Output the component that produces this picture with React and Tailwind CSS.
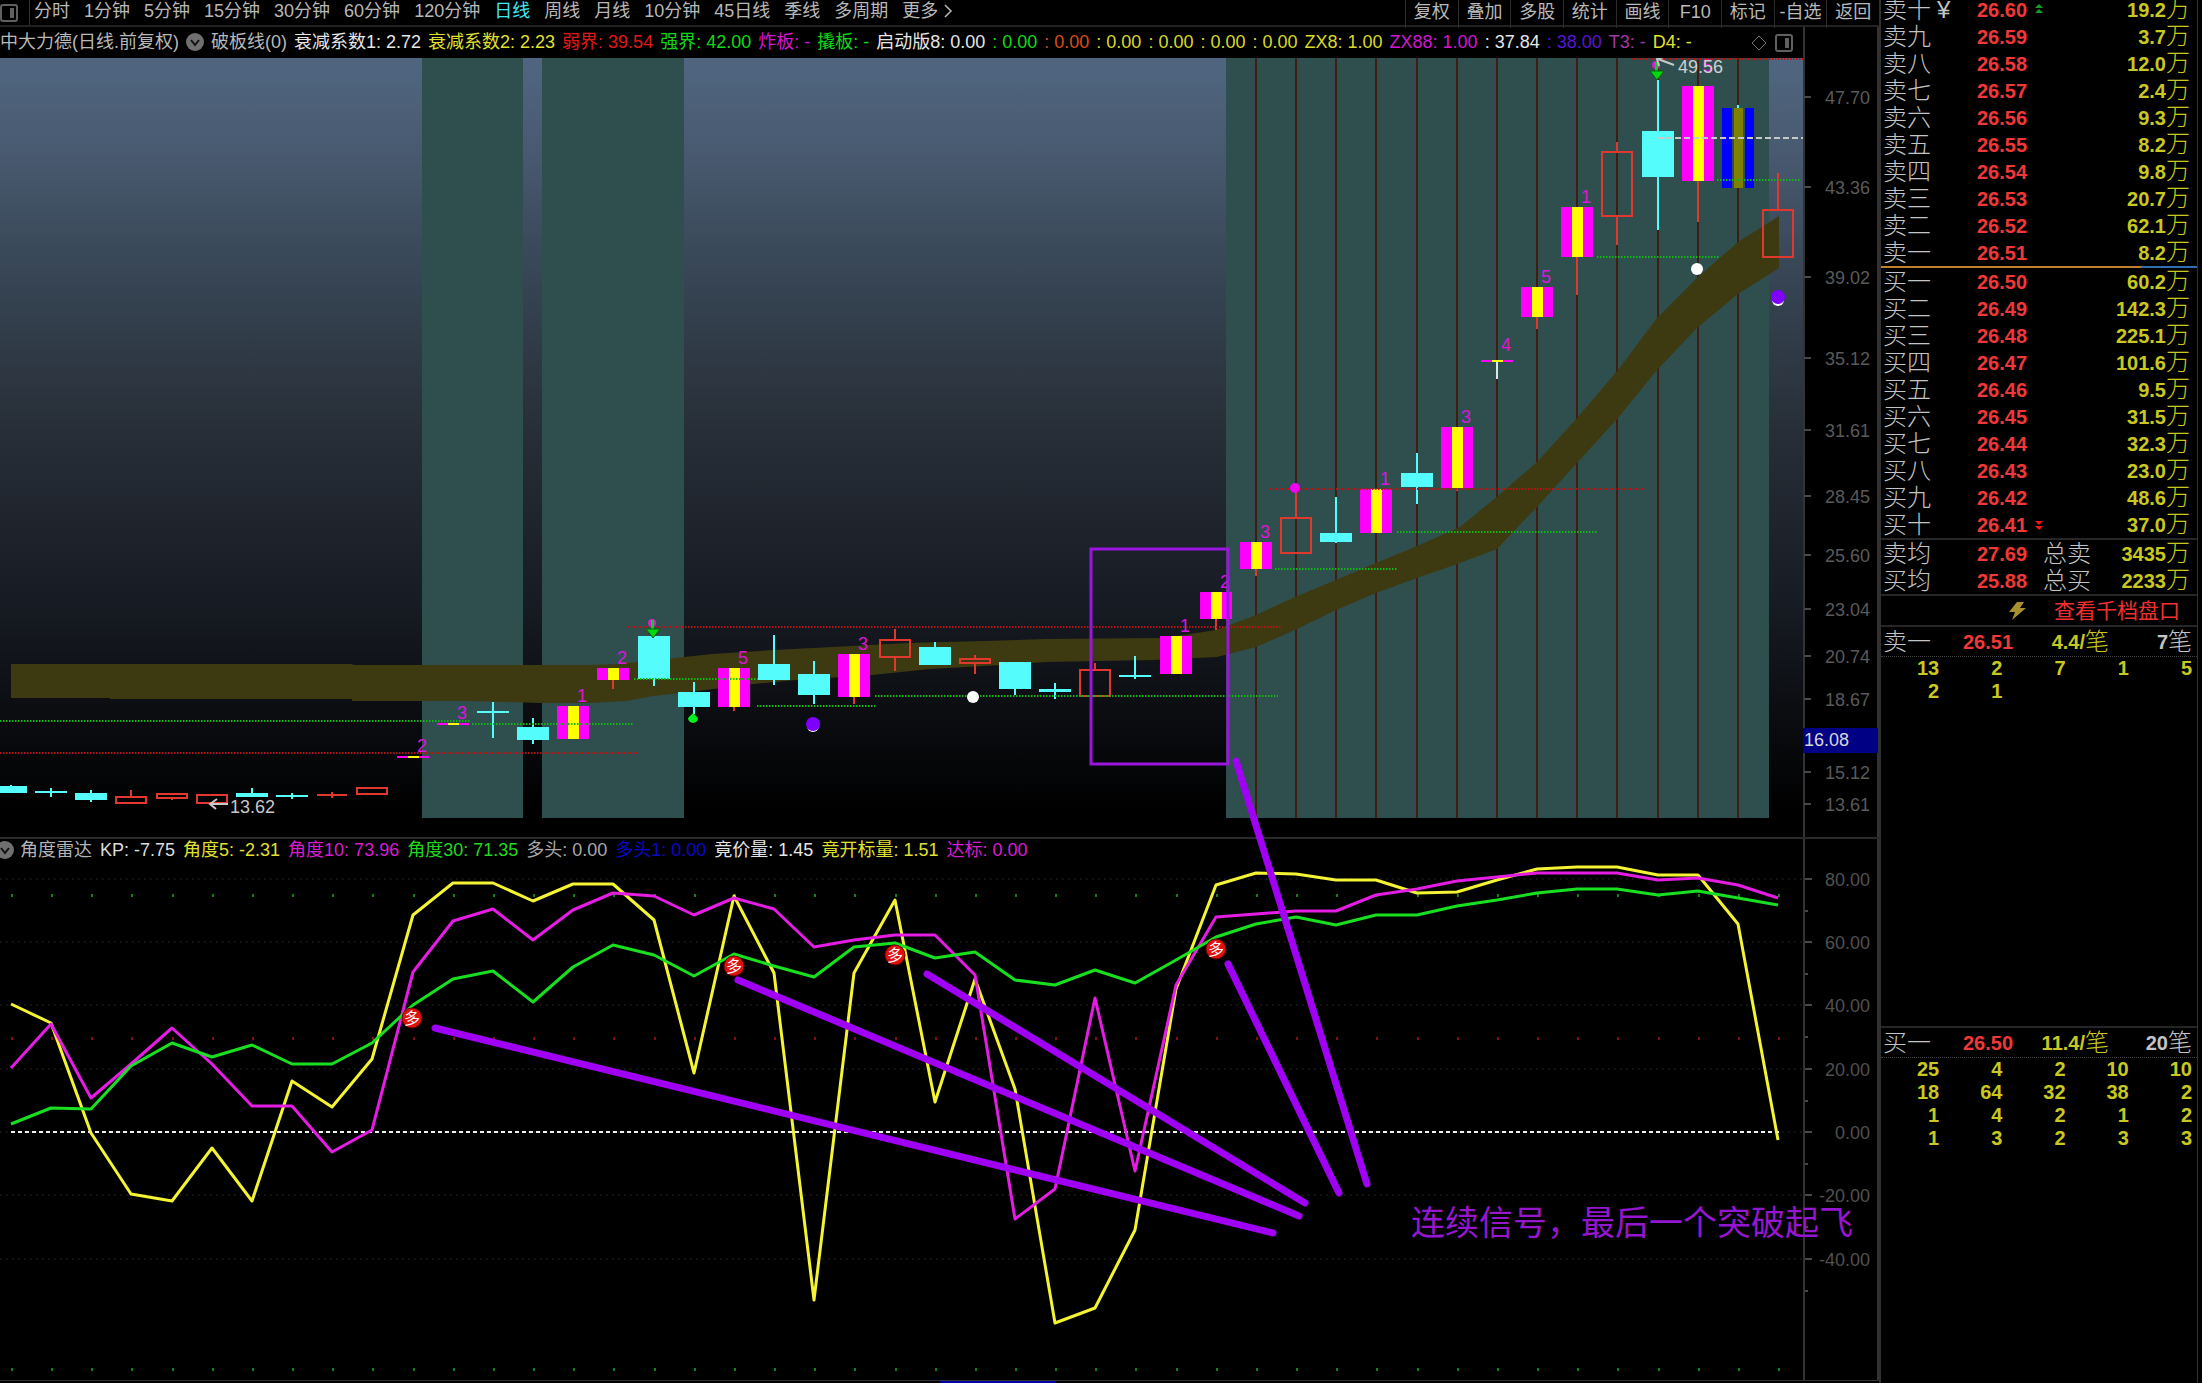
import React from "react";

const FONT = "font-['Liberation_Sans','Noto_Sans_CJK_SC',sans-serif]";

const PERIODS = ["分时", "1分钟", "5分钟", "15分钟", "30分钟", "60分钟", "120分钟", "日线", "周线", "月线", "10分钟", "45日线", "季线", "多周期", "更多"];
const TOOLS = ["复权", "叠加", "多股", "统计", "画线", "F10", "标记", "-自选", "返回"];

const MAIN_READOUT = [
  ["衰减系数1: 2.72", "text-[#e6e6e6]"],
  ["衰减系数2: 2.23", "text-[#e0e030]"],
  ["弱界: 39.54", "text-[#e01818]"],
  ["强界: 42.00", "text-[#10d818]"],
  ["炸板: -", "text-[#d018d0]"],
  ["撬板: -", "text-[#10d818]"],
  ["启动版8: 0.00", "text-[#e6e6e6]"],
  [": 0.00", "text-[#10d818]"],
  [": 0.00", "text-[#d84c1c]"],
  [": 0.00", "text-[#d8d828]"],
  [": 0.00", "text-[#d8d828]"],
  [": 0.00", "text-[#d8d828]"],
  [": 0.00", "text-[#d8d828]"],
  ["ZX8: 1.00", "text-[#d8d828]"],
  ["ZX88: 1.00", "text-[#d018d0]"],
  [": 37.84", "text-[#e6e6e6]"],
  [": 38.00", "text-[#5a14d8]"],
  ["T3: -", "text-[#a038a8]"],
  ["D4: -", "text-[#e0e030]"],
];

const SUB_READOUT = [
  ["角度雷达", "text-[#b4b4b4]"],
  ["KP: -7.75", "text-[#dcdcdc]"],
  ["角度5: -2.31", "text-[#e0e030]"],
  ["角度10: 73.96", "text-[#d81cd0]"],
  ["角度30: 71.35", "text-[#20d820]"],
  ["多头: 0.00", "text-[#a8a8a8]"],
  ["多头1: 0.00", "text-[#0808c8]"],
  ["竟价量: 1.45", "text-[#e6e6e6]"],
  ["竟开标量: 1.51", "text-[#e0e030]"],
  ["达标: 0.00", "text-[#d81cd0]"],
];

const barX = (i) => Math.round(11 + 40.16 * i);

// kind, body top, body bottom, wick top, wick bottom, streak label
const BARS = [
  ["down", 786, 793, 785, 793], ["down", 791, 793, 788, 797], ["down", 793, 800, 790, 802],
  ["up", 796, 803, 790, 803], ["up", 793, 798, 793, 800], ["up", 794, 803, 794, 803],
  ["down", 793, 797, 788, 797], ["down", 795, 797, 793, 799], ["flatUp", 794, 796, 792, 798],
  ["up", 787, 794, 787, 794], ["limit", 756, 758, 756, 758, "2"], ["limit", 723, 725, 723, 725, "3"],
  ["down", 711, 713, 702, 738], ["down", 727, 740, 718, 744], ["limit", 706, 739, 706, 739, "1"],
  ["limit", 668, 680, 668, 689, "2"], ["down", 636, 679, 636, 686], ["down", 692, 707, 682, 714],
  ["limit", 668, 707, 668, 711, "5"], ["down", 664, 680, 635, 685], ["down", 674, 695, 661, 704],
  ["limit", 654, 697, 654, 704, "3"], ["up", 639, 657, 629, 671], ["down", 647, 665, 642, 665],
  ["up", 658, 663, 655, 674], ["down", 662, 689, 662, 695], ["down", 689, 692, 683, 699],
  ["up", 669, 696, 663, 696], ["down", 675, 677, 656, 679], ["limit", 636, 674, 636, 674, "1"],
  ["limit", 592, 619, 592, 630, "2"], ["limit", 542, 569, 542, 576, "3"], ["up", 517, 553, 490, 553],
  ["down", 533, 542, 497, 543], ["limit", 489, 533, 489, 533, "1"], ["down", 473, 487, 453, 504],
  ["limit", 427, 488, 427, 491, "3"], ["spike", 360, 362, 360, 379, "4"], ["limit", 287, 317, 287, 329, "5"],
  ["limit", 207, 257, 207, 295, "1"], ["up", 151, 216, 142, 245], ["down", 131, 177, 80, 230],
  ["limit", 86, 181, 86, 222, "5"], ["blue", 108, 188, 105, 188], ["up", 209, 257, 173, 257],
];

const LIMIT_FILL = "#ff00ff";
const CYAN = "#54fcfc";
const RED = "#e0382e";

function Bar({ i, bar }) {
  const [kind, top, bottom, high, low, label] = bar;
  const x = barX(i);
  const h = bottom - top;
  const wick = (color) => <path d={`M${x} ${high}V${top}M${x} ${bottom}V${low}`} stroke={color} strokeWidth="2" />;
  const labelY = i === 42 ? 72 : top - (kind === "spike" ? 9 : 4);
  return (
    <g>
      {kind === "down" && <>{wick(CYAN)}<rect x={x - 16} y={top} width="32" height={h} fill={CYAN} /></>}
      {kind === "up" && <>{wick(RED)}<rect x={x - 15} y={top + 1} width="30" height={h - 1} fill="none" stroke={RED} strokeWidth="2" /></>}
      {kind === "flatUp" && <>{wick(RED)}<rect x={x - 15} y={top} width="30" height={h} fill={RED} /></>}
      {(kind === "limit" || kind === "spike") && (
        <>
          {wick(kind === "limit" ? RED : "#d8e8e8")}
          <rect x={x - 16} y={top} width="32" height={h} fill={LIMIT_FILL} />
          <rect x={x - 5} y={top} width="11" height={h} fill="#ffff00" />
        </>
      )}
      {kind === "blue" && (
        <>
          {wick(CYAN)}
          <rect x={x - 16} y={top} width="32" height={h} fill="#0000ff" />
          <rect x={x - 6} y={top} width="2" height={h} fill="#2f4f4f" />
          <rect x={x - 4} y={top} width="9" height={h} fill="#808000" />
          <rect x={x + 5} y={top} width="2" height={h} fill="#2f4f4f" />
        </>
      )}
      {label && <text x={x + 4} y={labelY} fontSize="18" fill="#dc14dc">{label}</text>}
    </g>
  );
}

const BAND =
  "11,664 352,664 353,665 590,665 620,664 653,660 675,658 712,654 774,650 832,647 908,643 984,641 1046,639 1162,638 1190,634 1216,630 1256,615 1295,597 1336,580 1376,563 1417,546 1460,527 1499,495 1537,462 1577,418 1618,370 1657,318 1697,278 1738,242 1779,216 " +
  "1779,268 1738,294 1697,328 1657,370 1618,418 1577,463 1537,507 1497,549 1460,563 1417,578 1376,593 1336,610 1295,630 1256,647 1217,657 1153,660 1046,662 1002,665 930,669 872,675 796,680 754,684 689,692 653,696 627,701 590,703 540,703 470,701 352,701 352,699 110,699 110,698 11,698";

const GREEN_LEVELS = [[721, 0, 471], [724, 472, 633], [679, 634, 758], [706, 757, 875], [696, 875, 1278], [569, 1275, 1397], [532, 1397, 1598], [257, 1597, 1719], [180, 1717, 1800]];
const RED_LEVELS = [[753, 0, 638], [627, 628, 1281], [489, 1270, 1644], [59, 1631, 1803]];
const PRICE_TICKS = [["47.70", 97], ["43.36", 187], ["39.02", 277], ["35.12", 358], ["31.61", 430], ["28.45", 496], ["25.60", 555], ["23.04", 609], ["20.74", 656], ["18.67", 699], ["15.12", 772], ["13.61", 804]];

function DownArrow({ x, y }) {
  return (
    <g fill="#00d810">
      <circle cx={x - 1} cy={y + 3} r="4" fill="#d020d0" />
      <rect x={x - 2} y={y} width="3" height="10" />
      <path d={`M${x - 7} ${y + 9}h14l-7 9z`} stroke="#046010" strokeWidth="1" />
    </g>
  );
}

function PriceChart() {
  return (
    <svg viewBox="0 58 1879 779" className="block h-auto w-full" role="img" aria-label="日线 K线图">
      <defs>
        <linearGradient id="sky" x1="0" y1="0" x2="0" y2="1">
          <stop offset="0" stopColor="#506680" />
          <stop offset="0.12" stopColor="#485a70" />
          <stop offset="0.28" stopColor="#374554" />
          <stop offset="0.48" stopColor="#272e37" />
          <stop offset="0.7" stopColor="#171b23" />
          <stop offset="0.97" stopColor="#000000" />
        </linearGradient>
      </defs>
      <rect x="0" y="58" width="1803" height="779" fill="url(#sky)" />
      <g fill="#2f4f4f">
        <rect x="422" y="58" width="101" height="760" />
        <rect x="542" y="58" width="142" height="760" />
        <rect x="1226" y="58" width="543" height="760" />
      </g>
      {BARS.map((_, i) => i >= 31 && i <= 43 && <path key={i} d={`M${barX(i)} 58V818`} stroke="#401c12" strokeWidth="2" />)}
      <polygon points={BAND} fill="#3d3a12" />
      <g shapeRendering="crispEdges">
        {BARS.map((bar, i) => <Bar key={i} i={i} bar={bar} />)}
      </g>
      {GREEN_LEVELS.map(([y, a, b]) => <path key={y} d={`M${a} ${y}H${b}`} stroke="#10b810" strokeWidth="2" strokeDasharray="1.5 1.5" />)}
      {RED_LEVELS.map(([y, a, b]) => <path key={y} d={`M${a} ${y}H${b}`} stroke="#b81414" strokeWidth="2" strokeDasharray="1.5 1.5" />)}
      <path d="M1657 138H1803" stroke="#c8c8c8" strokeWidth="2" strokeDasharray="6 3" />
      <DownArrow x={653} y={620} />
      <DownArrow x={1657} y={62} />
      <path d="M693 713l5 5a5 5 0 1 1 -10 0z" fill="#00f020" />
      <circle cx="1295" cy="488" r="5" fill="#f000f0" />
      <circle cx="973" cy="697" r="6" fill="#fff" />
      <circle cx="1697" cy="269" r="6" fill="#fff" />
      <circle cx="813" cy="726" r="6" fill="#fff" />
      <circle cx="813" cy="724" r="7" fill="#8000ff" />
      <circle cx="1778" cy="300" r="6" fill="#fff" />
      <circle cx="1778" cy="297" r="7" fill="#8000ff" />
      <g fill="none" stroke="#c8c8c8" strokeWidth="2">
        <path d="M228 804H210M217 799L210 804L216 809" />
        <path d="M1674 65L1658 59M1664 57L1657 59L1659 66" />
      </g>
      <text x="230" y="813" fontSize="18" fill="#c8c8c8">13.62</text>
      <text x="1678" y="73" fontSize="18" fill="#d0d0d0">49.56</text>

      <rect x="1803" y="58" width="76" height="779" fill="#000" />
      <path d="M1804 58V837M1878 58V837" stroke="#333" strokeWidth="2" />
      {PRICE_TICKS.map(([t, y]) => (
        <g key={t}>
          <path d={`M1804 ${y}h7`} stroke="#484848" strokeWidth="2" />
          <text x="1870" y={y + 7} fontSize="18" textAnchor="end" fill="#5a5a5a">{t}</text>
        </g>
      ))}
      <rect x="1803" y="728" width="75" height="25" fill="#000084" />
      <text x="1804" y="746" fontSize="18" fill="#d8d8d8">16.08</text>
    </svg>
  );
}

const ANGLE5 = [1004, 1023, 1133, 1194, 1201, 1148, 1201, 1081, 1107, 1059, 915, 883, 883, 901, 884, 884, 920, 1073, 896, 973, 1300, 973, 900, 1102, 979, 1089, 1323, 1308, 1230, 989, 885, 873, 874, 880, 880, 893, 892, 880, 869, 867, 867, 875, 875, 924, 1140];
const ANGLE10 = [1068, 1024, 1098, 1064, 1028, 1064, 1106, 1106, 1152, 1130, 972, 921, 909, 940, 910, 893, 896, 915, 898, 909, 947, 940, 935, 935, 975, 1219, 1189, 998, 1171, 985, 917, 914, 911, 911, 895, 889, 881, 877, 873, 873, 873, 880, 878, 885, 898];
const ANGLE30 = [1124, 1108, 1109, 1066, 1043, 1057, 1045, 1064, 1064, 1043, 1005, 979, 971, 1002, 967, 945, 955, 976, 954, 966, 977, 947, 943, 958, 952, 980, 985, 970, 983, 960, 937, 924, 917, 925, 915, 915, 906, 900, 893, 889, 889, 895, 891, 898, 905];
const toPoints = (values) => values.map((y, i) => `${barX(i)},${y}`).join(" ");

const ANGLE_TICKS = [["80.00", 879], ["60.00", 942], ["40.00", 1005], ["20.00", 1069], ["0.00", 1132], ["-20.00", 1195], ["-40.00", 1259]];
const SIGNALS = [[412, 1018], [734, 966], [895, 955], [1216, 949]];

function AngleChart() {
  return (
    <svg viewBox="0 864 1879 516" className="block h-auto w-full" role="img" aria-label="角度雷达指标图">
      {ANGLE_TICKS.map(([t, y]) => (
        <g key={t}>
          <path d={`M0 ${y}H1803`} stroke="#303030" strokeWidth="1" strokeDasharray="1.5 4.5" />
          <path d={`M1804 ${y}h8M1804 ${y + 32}h4`} stroke="#484848" strokeWidth="2" />
          <text x="1870" y={y + 7} fontSize="18" textAnchor="end" fill="#505050">{t}</text>
        </g>
      ))}
      {ANGLE5.map((_, i) => (
        <g key={i}>
          <rect x={barX(i)} y="894" width="2" height="3" fill="#108018" />
          <rect x={barX(i)} y="1037" width="2" height="3" fill="#801010" />
          <rect x={barX(i)} y="1368" width="2" height="3" fill="#108018" />
        </g>
      ))}
      <path d="M11 1132H1779" stroke="#f0f0f0" strokeWidth="2" strokeDasharray="4 3" />
      <g fill="none" strokeWidth="3" strokeLinejoin="round">
        <polyline points={toPoints(ANGLE5)} stroke="#f4f434" />
        <polyline points={toPoints(ANGLE10)} stroke="#e41ce4" />
        <polyline points={toPoints(ANGLE30)} stroke="#18e020" />
      </g>
      {SIGNALS.map(([x, y]) => (
        <g key={x}>
          <circle cx={x} cy={y} r="10" fill="#e01010" stroke="#700000" strokeWidth="1" />
          <text x={x} y={y + 6} fontSize="16" textAnchor="middle" fill="#fff">多</text>
        </g>
      ))}
      <path d="M1804 864V1380M1878 864V1380" stroke="#333" strokeWidth="2" />
    </svg>
  );
}

function Annotations() {
  return (
    <svg viewBox="0 58 1879 1322" className="pointer-events-none absolute inset-0 h-full w-full" aria-label="标注">
      <rect x="1091" y="549" width="137" height="215" fill="none" stroke="#9a16dc" strokeWidth="3" />
      <g stroke="#a000f4" strokeWidth="7" strokeLinecap="round">
        <path d="M1236 761L1367 1184" />
        <path d="M1228 964L1339 1193" />
        <path d="M927 974L1305 1203" />
        <path d="M738 980L1299 1216" />
        <path d="M435 1028L1273 1233" />
      </g>
      <text x="1411" y="1235" fontSize="34" fill="#9416d0">连续信号，最后一个突破起飞</text>
    </svg>
  );
}

function PanelIcon({ size }) {
  return (
    <svg width={size} height={size} viewBox="0 0 18 18" fill="none" stroke="#606060" strokeWidth="2" aria-hidden="true">
      <rect x="1" y="1" width="16" height="16" rx="2" />
      <rect x="10" y="4" width="4" height="10" fill="#606060" stroke="none" />
    </svg>
  );
}

function Collapse({ label }) {
  return (
    <button type="button" aria-label={label} className="shrink-0">
      <svg width="18" height="18" viewBox="0 0 18 18" aria-hidden="true">
        <circle cx="9" cy="9" r="9" fill="#707070" />
        <path d="M5 7l4 5l4 -5" fill="none" stroke="#101010" strokeWidth="2" />
      </svg>
    </button>
  );
}

const ASKS = [["卖十", "26.60", "19.2"], ["卖九", "26.59", "3.7"], ["卖八", "26.58", "12.0"], ["卖七", "26.57", "2.4"], ["卖六", "26.56", "9.3"], ["卖五", "26.55", "8.2"], ["卖四", "26.54", "9.8"], ["卖三", "26.53", "20.7"], ["卖二", "26.52", "62.1"], ["卖一", "26.51", "8.2"]];
const BIDS = [["买一", "26.50", "60.2"], ["买二", "26.49", "142.3"], ["买三", "26.48", "225.1"], ["买四", "26.47", "101.6"], ["买五", "26.46", "9.5"], ["买六", "26.45", "31.5"], ["买七", "26.44", "32.3"], ["买八", "26.43", "23.0"], ["买九", "26.42", "48.6"], ["买十", "26.41", "37.0"]];
const TOTALS = [["卖均", "27.69", "3435", "总卖"], ["买均", "25.88", "2233", "总买"]];

function Mark({ dir }) {
  return (
    <svg width="8" height="12" viewBox="0 0 8 12" className="block" aria-hidden="true">
      {dir === "up" ? (
        <path d="M4 0l4 4H0zM4 5l4 4H0z" fill="#10a020" />
      ) : (
        <path d="M0 2h8l-4 4zM0 7h8l-4 4z" fill="#f01818" />
      )}
    </svg>
  );
}

function BookTable({ rows, label }) {
  return (
    <table className="w-full table-fixed border-collapse" aria-label={label}>
      <colgroup>
        <col className="w-[94px]" />
        <col className="w-[54px]" />
        <col className="w-[60px]" />
        <col />
      </colgroup>
      <tbody>
        {rows.map(([name, price, vol, total]) => (
          <tr key={name} className="h-[27px] text-xl leading-5 font-bold">
            <th scope="row" className="p-0 text-left text-2xl leading-5 font-light whitespace-nowrap text-[#c4c4c4]">
              {name}{name === "卖十" && <span className="pl-1.5">¥</span>}
            </th>
            <td className="p-0 text-[#f03838]">{price}</td>
            <td className="p-0 pl-1 text-2xl leading-5 font-light whitespace-nowrap text-[#c4c4c4]">
              {name === "卖十" && <Mark dir="up" />}
              {name === "买十" && <Mark dir="down" />}
              {total && <span className="pl-2">{total}</span>}
            </td>
            <td className="p-0 text-right whitespace-nowrap text-[#c8c820]">
              {vol}<span className="text-2xl leading-5 font-light">万</span>
            </td>
          </tr>
        ))}
      </tbody>
    </table>
  );
}

function Queue({ name, price, average, count, rows }) {
  return (
    <section>
      <div className="flex h-[30px] items-center border-b border-dotted border-[#444] pr-[5px] pl-0.5 text-xl leading-7 font-bold">
        <span className="w-20 text-2xl leading-7 font-light text-[#c4c4c4]">{name}</span>
        <span className="w-[60px] text-[#f03838]">{price}</span>
        <span className="flex w-[86px] items-center justify-end text-[#c8c820]">{average}/<span className="text-2xl leading-7 font-light">笔</span></span>
        <span className="flex flex-1 items-center justify-end text-[#c4c4c4]">{count}<span className="text-2xl leading-7 font-light">笔</span></span>
      </div>
      <table className="w-full table-fixed border-collapse text-xl font-bold text-[#c8c820]" aria-label={`${name}队列`}>
        <tbody>
          {rows.map((row, r) => (
            <tr key={r} className="h-[23px] leading-[23px]">
              {row.map((v, c) => <td key={c} className="p-0 pr-[5px] text-right">{v}</td>)}
            </tr>
          ))}
        </tbody>
      </table>
    </section>
  );
}

export default function App() {
  return (
    <div className={`flex min-h-screen w-full overflow-hidden bg-black text-[#b8b8b8] ${FONT}`}>
      <main className="min-w-0 flex-1">
        <nav className="flex h-[27px] items-stretch border-b-2 border-[#222] text-lg leading-6 whitespace-nowrap" aria-label="周期">
          <button type="button" aria-label="侧栏" className="flex w-[30px] items-center border-r border-[#333]"><PanelIcon size={18} /></button>
          <div className="flex flex-1 items-center gap-3.5 pb-1 pl-1">
            {PERIODS.map((p) => (
              <button type="button" key={p} className={p === "日线" ? "text-[#40e8f0]" : ""}>
                {p}
              </button>
            ))}
            <svg width="9" height="18" viewBox="0 0 9 18" className="-ml-2" fill="none" stroke="#b8b8b8" strokeWidth="1.5" aria-hidden="true"><path d="M1 3l6 6l-6 6" /></svg>
          </div>
          <div className="grid w-[474px] grid-cols-9">
            {TOOLS.map((t) => (
              <button type="button" key={t} className="border-l border-[#2c2c2c] pb-1">{t}</button>
            ))}
          </div>
        </nav>

        <div className="flex h-[31px] items-center text-lg leading-6 whitespace-nowrap">
          <div className="flex min-w-0 flex-1 items-center gap-[7px] pb-0.5">
            <span>中大力德(日线.前复权)</span>
            <Collapse label="折叠主图" />
            <span>破板线(0)</span>
            {MAIN_READOUT.map(([t, c], i) => <span key={i} className={c}>{t}</span>)}
          </div>
          <div className="flex w-[52px] shrink-0 items-center gap-2">
            <svg width="16" height="18" viewBox="0 0 16 18" fill="none" stroke="#707070" aria-hidden="true"><path d="M8 2l7 7l-7 7l-7 -7z" /></svg>
            <PanelIcon size={18} />
          </div>
          <div className="h-full w-[76px] shrink-0 border-x-2 border-[#333]" />
        </div>

        <div className="relative">
          <PriceChart />
          <div className="flex h-[27px] items-stretch border-t-2 border-[#2a2a2a] text-lg leading-6 whitespace-nowrap">
            <div className="flex flex-1 items-center gap-2 overflow-hidden pb-1">
              <div className="-mr-0.5 -ml-1 flex"><Collapse label="折叠副图" /></div>
              {SUB_READOUT.map(([t, c]) => <span key={t} className={c}>{t}</span>)}
            </div>
            <div className="w-[76px] border-x-2 border-[#333]" />
          </div>
          <AngleChart />
          <Annotations />
        </div>
        <div className="flex h-[3px] border-t border-[#333]">
          <div className="w-1/2" />
          <div className="w-[116px] bg-[#0000a0]" />
        </div>
      </main>

      <aside className="mr-1 flex w-[319px] shrink-0 flex-col border-r border-l-2 border-[#303030]">
        <div className="-mt-1 pr-[7px] pl-0.5"><BookTable rows={ASKS} label="卖盘" /></div>
        <div className="flex h-0.5"><div className="flex-1 bg-[#c08030]" /><div className="w-14 bg-[#3070b0]" /></div>
        <div className="border-b-2 border-[#262626] pr-[7px] pl-0.5"><BookTable rows={BIDS} label="买盘" /></div>
        <div className="pr-[7px] pl-0.5"><BookTable rows={TOTALS} label="均价" /></div>
        <div className="flex h-[33px] items-center justify-end gap-7 border-y-2 border-[#262626] pr-[17px]">
          <svg width="18" height="18" viewBox="0 0 18 18" aria-hidden="true"><path d="M9 0h7l-4 6h6L4 18l3 -8H1z" fill="#a89030" /></svg>
          <a href="#depth" className="text-[21px] leading-7 text-[#f03030]">查看千档盘口</a>
        </div>
        <Queue name="卖一" price="26.51" average="4.4" count="7" rows={[[13, 2, 7, 1, 5], [2, 1, "", "", ""]]} />
        <div className="mt-[323px] border-t-2 border-[#262626]">
          <Queue name="买一" price="26.50" average="11.4" count="20" rows={[[25, 4, 2, 10, 10], [18, 64, 32, 38, 2], [1, 4, 2, 1, 2], [1, 3, 2, 3, 3]]} />
        </div>
      </aside>
    </div>
  );
}
